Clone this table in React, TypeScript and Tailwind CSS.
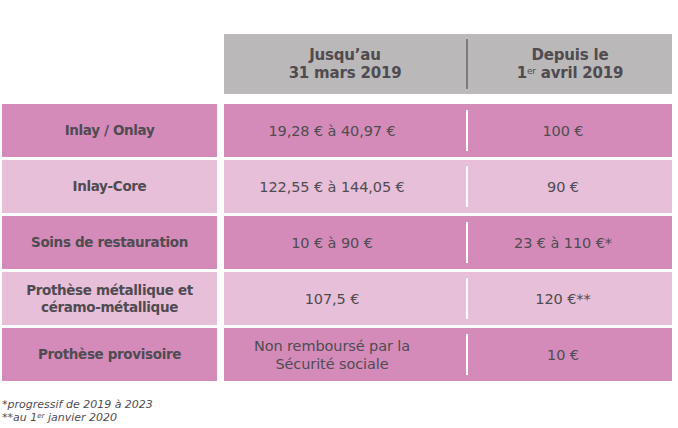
const rows = [
  { label: ["Inlay / Onlay"], before: ["19,28 € à 40,97 €"], after: "100 €", dark: true },
  { label: ["Inlay-Core"], before: ["122,55 € à 144,05 €"], after: "90 €", dark: false },
  { label: ["Soins de restauration"], before: ["10 € à 90 €"], after: "23 € à 110 €*", dark: true },
  { label: ["Prothèse métallique et", "céramo-métallique"], before: ["107,5 €"], after: "120 €**", dark: false },
  { label: ["Prothèse provisoire"], before: ["Non remboursé par la", "Sécurité sociale"], after: "10 €", dark: true },
];

export default function App() {
  return (
    <div
      className="w-[678px] h-[428px] bg-white pt-[34px] pl-[2px] text-[#4f4b50]"
      style={{ fontFamily: '"DejaVu Sans", "Liberation Sans", sans-serif' }}
    >
      {/* header */}
      <div className="flex">
        <div className="w-[215px] mr-[7px]" />
        <div className="w-[448px] h-[60px] bg-[#bab8b9] flex font-bold text-[15px] leading-[18px] tracking-[-0.2px]">
          <div className="w-[242px] flex flex-col items-center justify-center">
            <span>Jusqu’au</span>
            <span>31 mars 2019</span>
          </div>
          <div className="w-[2px] bg-[#7e7a7c] my-[5px]" />
          <div className="flex-1 flex flex-col items-center justify-center">
            <span>Depuis le</span>
            <span>
              1<sup className="text-[9px] font-normal">er</sup> avril 2019
            </span>
          </div>
        </div>
      </div>

      {/* rows */}
      <div className="mt-[10px] flex flex-col gap-[3px]">
        {rows.map((r, i) => (
          <div key={i} className="flex h-[53px]">
            <div
              className={`w-[215px] mr-[7px] flex flex-col items-center justify-center font-bold text-[13.5px] leading-[17px] tracking-[-0.35px] ${
                r.dark ? "bg-[#d48bba]" : "bg-[#e8bfd9]"
              }`}
            >
              {r.label.map((l) => (
                <span key={l}>{l}</span>
              ))}
            </div>
            <div
              className={`w-[448px] flex text-[14.5px] leading-[18px] tracking-[-0.1px] ${
                r.dark ? "bg-[#d48bba]" : "bg-[#e8bfd9]"
              }`}
            >
              <div className="w-[242px] pr-[26px] flex flex-col items-center justify-center">
                {r.before.map((l) => (
                  <span key={l}>{l}</span>
                ))}
              </div>
              <div className="w-[2px] bg-white my-[6px]" />
              <div className="flex-1 pr-[14px] flex items-center justify-center">{r.after}</div>
            </div>
          </div>
        ))}
      </div>

      {/* footnotes */}
      <div className="mt-[17px] italic text-[11px] leading-[13px] flex flex-col">
        <span>*progressif de 2019 à 2023</span>
        <span>
          **au 1<sup className="text-[7px]">er</sup> janvier 2020
        </span>
      </div>
    </div>
  );
}
